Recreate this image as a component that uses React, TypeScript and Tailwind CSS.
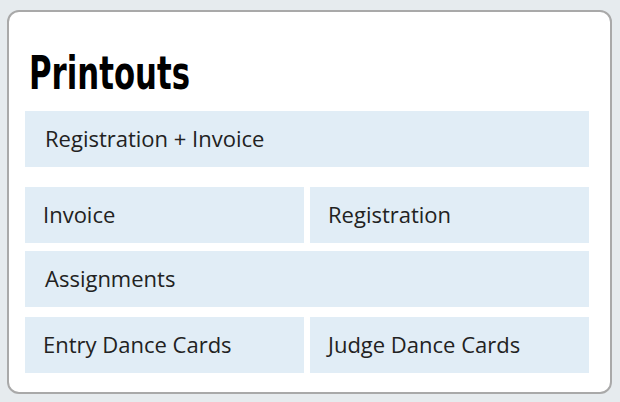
import React from 'react';

const Cell: React.FC<{ label: string; pad?: string }> = ({ label, pad = 'pl-[18px]' }) => (
  <div className={`h-[56px] flex items-center bg-[#e1edf6] text-[#222] text-[22px] pb-[1px] ${pad}`}>
    {label}
  </div>
);

export default function App() {
  return (
    <div className="w-[620px] h-[402px] bg-[#e6ebee] pt-[10px] pl-[7px] overflow-hidden">
      <div
        className="w-[605px] h-[384px] bg-white border-2 border-[#a9a9a9] rounded-[12px] pl-[16px] pr-[21px] pt-[33px]"
        style={{ fontFamily: '"Open Sans", "Liberation Sans", sans-serif' }}
      >
        <h1
          className="text-[47px] leading-[56px] font-bold text-black mb-[10px] pl-[4px]"
          style={{ fontFamily: '"DejaVu Sans Condensed", "DejaVu Sans", sans-serif' }}
        >
          <span className="inline-block origin-left scale-x-[0.728]">Printouts</span>
        </h1>
        <div className="flex flex-col w-[564px]">
          <Cell label="Registration + Invoice" pad="pl-[20px]" />
          <div className="grid grid-cols-2 gap-[6px] mt-[20px]">
            <Cell label="Invoice" />
            <Cell label="Registration" />
          </div>
          <div className="mt-[8px]">
            <Cell label="Assignments" pad="pl-[20px]" />
          </div>
          <div className="grid grid-cols-2 gap-[6px] mt-[10px]">
            <Cell label="Entry Dance Cards" />
            <Cell label="Judge Dance Cards" />
          </div>
        </div>
      </div>
    </div>
  );
}
